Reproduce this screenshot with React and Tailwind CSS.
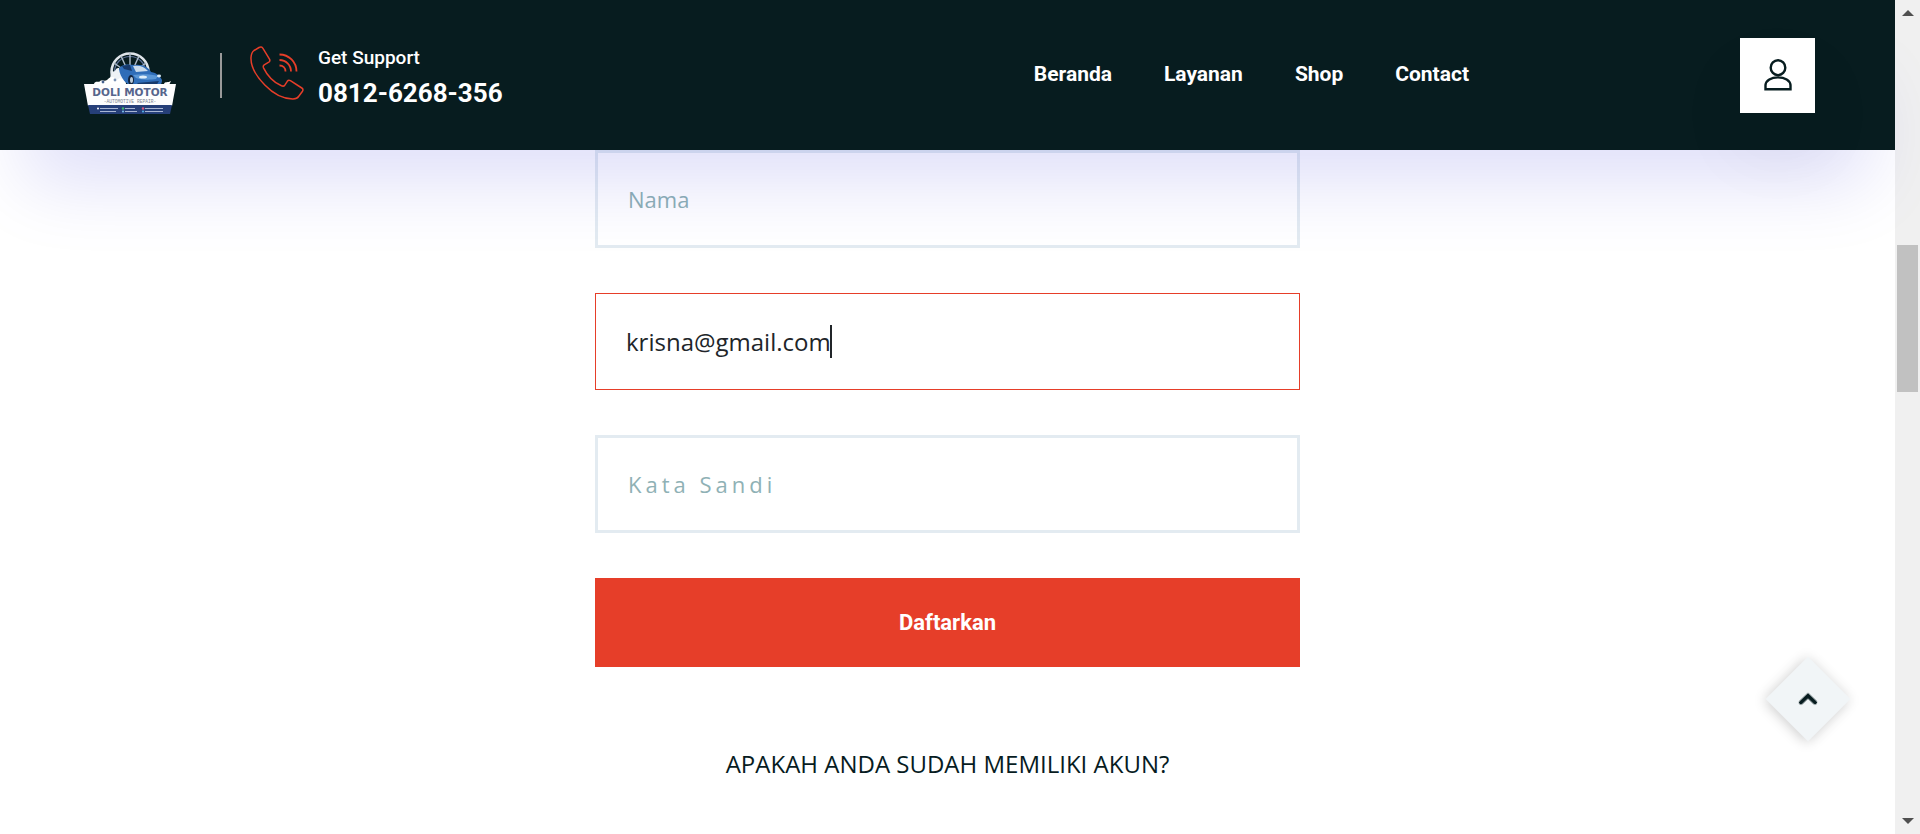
import React from "react";

const links = ["Beranda", "Layanan", "Shop", "Contact"];

function Logo() {
  return (
    <svg viewBox="0 0 92 64" className="h-16 w-[92px]" role="img" aria-label="Doli Motor">
      <g fill="none" stroke="#dfe5ea" strokeWidth="1.4">
        <circle cx="46" cy="21" r="18.500" strokeWidth="2.6" />
        <circle cx="46" cy="21" r="15.500" stroke="#5b6f96" strokeWidth="1.200" />
        <path d="M46 2v14M37 5l5 11M55 5l-5 11M30 12l10 7M62 12l-10 7" stroke="#aebccb" />
      </g>
      <path d="M26 34c-2-7 2-9 2-14 4 2 3-4 7-3 1 4 6 6 7 17z" fill="#eef2f6" />
      <path d="M10 33c1-4 5-1 6-3 3-2 4 1 7-1 4-5 8-3 10 0 4-4 8 0 9 4zM80 33c1-3 4-1 7-3l-2 4z" fill="#fff" />
      <circle cx="19" cy="31" r="1.400" fill="#46618f" />
      <circle cx="31" cy="29" r="1.400" fill="#7b93b5" />
      <path d="M35 18c3-5 8-5 16-4 8-1 14 3 16 7 6 1 9 4 11 8 0 4-2 6-5 6l-24 1c-6-2-13-9-14-18z" fill="#2f6db8" />
      <path d="M49 15c6-1 11 0 15 5l-12 1z" fill="#cbdcec" />
      <path d="M38 15c3-1 6-1 8-1l2 6-8-2z" fill="#173a6c" />
      <path d="M49 24c8-1 18-1 25 1l-2 3c-6 1-15 1-20-1z" fill="#5b97d6" />
      <path d="M53 32l22-2-3 5H56z" fill="#173a6c" />
      <ellipse cx="47" cy="29" rx="3" ry="5" fill="#12243f" />
      <ellipse cx="47.500" cy="29" rx="1.500" ry="3" fill="#b9c9d8" />
      <ellipse cx="59" cy="26" rx="4" ry="1.600" fill="#dfeefa" />
      <ellipse cx="75" cy="25" rx="2" ry="1.400" fill="#dfeefa" />
      <path d="M0 33h92l-4 22H4z" fill="#fdfdfe" />
      <path d="M4 54h84l-2 9H6z" fill="#263f79" />
      <text x="46" y="44.500" textAnchor="middle" fontFamily="DejaVu Sans, sans-serif" fontWeight="bold" fontSize="10.500" fill="#56658c">DOLI MOTOR</text>
      <text x="46" y="52" textAnchor="middle" fontFamily="Liberation Mono, monospace" fontSize="4.600" fill="#7b828f">-AUTOMOTIVE REPAIR-</text>
      <g strokeWidth="1" stroke="#a9b6d3">
        <path d="M16 57.500h18M16 60.500h16M41 57.500h10M41 60.500h12M61 57.500h18M61 60.500h18" />
      </g>
      <circle cx="14" cy="57.500" r="1" fill="#fff" />
      <circle cx="39" cy="57.500" r="1.200" fill="#3fb66b" />
      <circle cx="39" cy="60.500" r="1" fill="#7dc4ea" />
      <circle cx="59" cy="57.500" r="1.200" fill="#d8567c" />
      <circle cx="59" cy="60.500" r="1" fill="#55b6e8" />
    </svg>
  );
}

function PhoneIcon() {
  return (
    <svg viewBox="0 0 54 54" className="size-[54px]" fill="none" stroke="#e63e29" strokeWidth="1.5" strokeLinejoin="round" aria-hidden="true">
      <path d="M9 1.500C10.500.600 12 .800 12.800 2.200L19.500 13.200C20.200 14.500 19.800 15.500 18.800 16.200L14.200 18.800C13.200 19.500 13 20.500 13.500 21.800C17 29 24 36.500 31.500 39.800C33 40.400 34 40.200 34.800 39.200L37.300 35.300C38 34.300 39.200 34 40.400 34.700L51.800 42C53 42.800 53.200 44 52.500 45.200L48.600 50.500C47.500 52.200 45.500 52.800 43 52.900C33 53 23 47.500 14.800 39C6.500 30.500.600 20 1 11.500C1.200 8.500 2 6 4 4.500Z" />
      <path d="M29.500 8.500c9.500 0 17 7.500 17 17M29.500 14c6.500 0 11.500 5 11.500 11.500M29.500 19.500c3.500 0 6 2.500 6 6" strokeWidth="1.800" />
    </svg>
  );
}

function UserIcon() {
  return (
    <svg viewBox="0 0 28 32" className="h-8 w-7" fill="none" stroke="#071c1f" strokeWidth="2.400" aria-hidden="true">
      <ellipse cx="14" cy="8.700" rx="7.300" ry="7.400" />
      <path d="M1.500 30.300V26C2 21.500 7 18.400 14 18.400S26 21.500 26.500 26v4.300z" />
    </svg>
  );
}

const field =
  "block h-[98px] w-full border-[3px] border-[#e3ebf1] bg-transparent px-[30px] text-[22px] text-[#212529] outline-none placeholder:text-[#8fb1b5]";

export default function App() {
  return (
    <div className="flex h-screen overflow-hidden bg-white font-['Open_Sans',sans-serif]">
      <div className="min-w-0 flex-1">
        <header className="relative z-10 flex h-[150px] items-center bg-[#071c1f] pr-20 pl-21 font-[Roboto,sans-serif] text-white shadow-[0_58px_75px_-25px_rgba(0,0,207,0.13)]">
          <div className="flex flex-1 items-center">
            <a href="#beranda" className="mt-4">
              <Logo />
            </a>
            <span className="ml-11 h-[45px] w-0.5 bg-[#9a9a9a]" />
            <a href="tel:08126268356" className="mt-3 ml-7 flex items-start gap-[14px]">
              <PhoneIcon />
              <span className="flex flex-col">
                <span className="text-[19px] leading-6 font-medium">Get Support</span>
                <span className="text-[26px] leading-[46px] font-bold">0812-6268-356</span>
              </span>
            </a>
          </div>
          <nav className="flex gap-[52px] pb-0.5 text-[21px] leading-8 font-bold">
            {links.map((l) => (
              <a key={l} href={"#" + l.toLowerCase()}>
                {l}
              </a>
            ))}
          </nav>
          <div className="flex w-[346px] justify-end">
            <button aria-label="Akun" className="flex size-[75px] items-center justify-center bg-white shadow-[0_38px_75px_rgba(7,28,31,0.06)]">
              <UserIcon />
            </button>
          </div>
        </header>

        <main className="mx-auto w-[705px] max-w-full">
          <form className="flex flex-col gap-[45px]" onSubmit={(e) => e.preventDefault()}>
            <input className={field} type="text" aria-label="Nama" placeholder="Nama" />
            <div className="relative">
              <input
                className="block h-[97px] w-full border border-[#e63e29] bg-transparent px-[30px] text-[24px] text-[#212529] outline-none"
                type="email"
                aria-label="Email"
                defaultValue="krisna@gmail.com"
              />
              <span className="absolute top-8 left-[235px] h-[33px] w-0.5 bg-[#212529]" />
            </div>
            <input className={field + " tracking-[4px]"} type="password" aria-label="Kata Sandi" placeholder="Kata Sandi" />
            <button className="h-[89px] w-full bg-[#e63e29] font-[Roboto,sans-serif] text-[22px] font-bold text-white">Daftarkan</button>
          </form>
          <p className="mt-[79px] text-center text-[24px] leading-9 text-[#071c1f]">
            <a href="#masuk">APAKAH ANDA SUDAH MEMILIKI AKUN?</a>
          </p>
        </main>
      </div>

      <button
        aria-label="Kembali ke atas"
        className="fixed right-[82px] bottom-[105px] flex size-[60px] rotate-45 items-center justify-center bg-[#f1f5f7] shadow-[0_2px_12px_rgba(0,0,0,0.2)]"
      >
        <svg viewBox="0 0 20 14" className="h-[14px] w-5 -rotate-45" fill="none" stroke="#071c1f" strokeWidth="4" strokeLinecap="round" aria-hidden="true">
          <path d="M3 10.500L10 3.800l7 6.700" />
        </svg>
      </button>

      <div className="flex w-[25px] flex-col items-center bg-[#f0f0f0] py-2.5" aria-hidden="true">
        <svg viewBox="0 0 12 6" className="h-1.5 w-3 fill-[#505050]">
          <path d="M0 6L6 0l6 6z" />
        </svg>
        <div className="mt-[229px] h-[147px] w-[21px] bg-[#c1c1c1]" />
        <svg viewBox="0 0 12 6" className="mt-auto h-1.5 w-3 fill-[#505050]">
          <path d="M0 0h12L6 6z" />
        </svg>
      </div>
    </div>
  );
}
